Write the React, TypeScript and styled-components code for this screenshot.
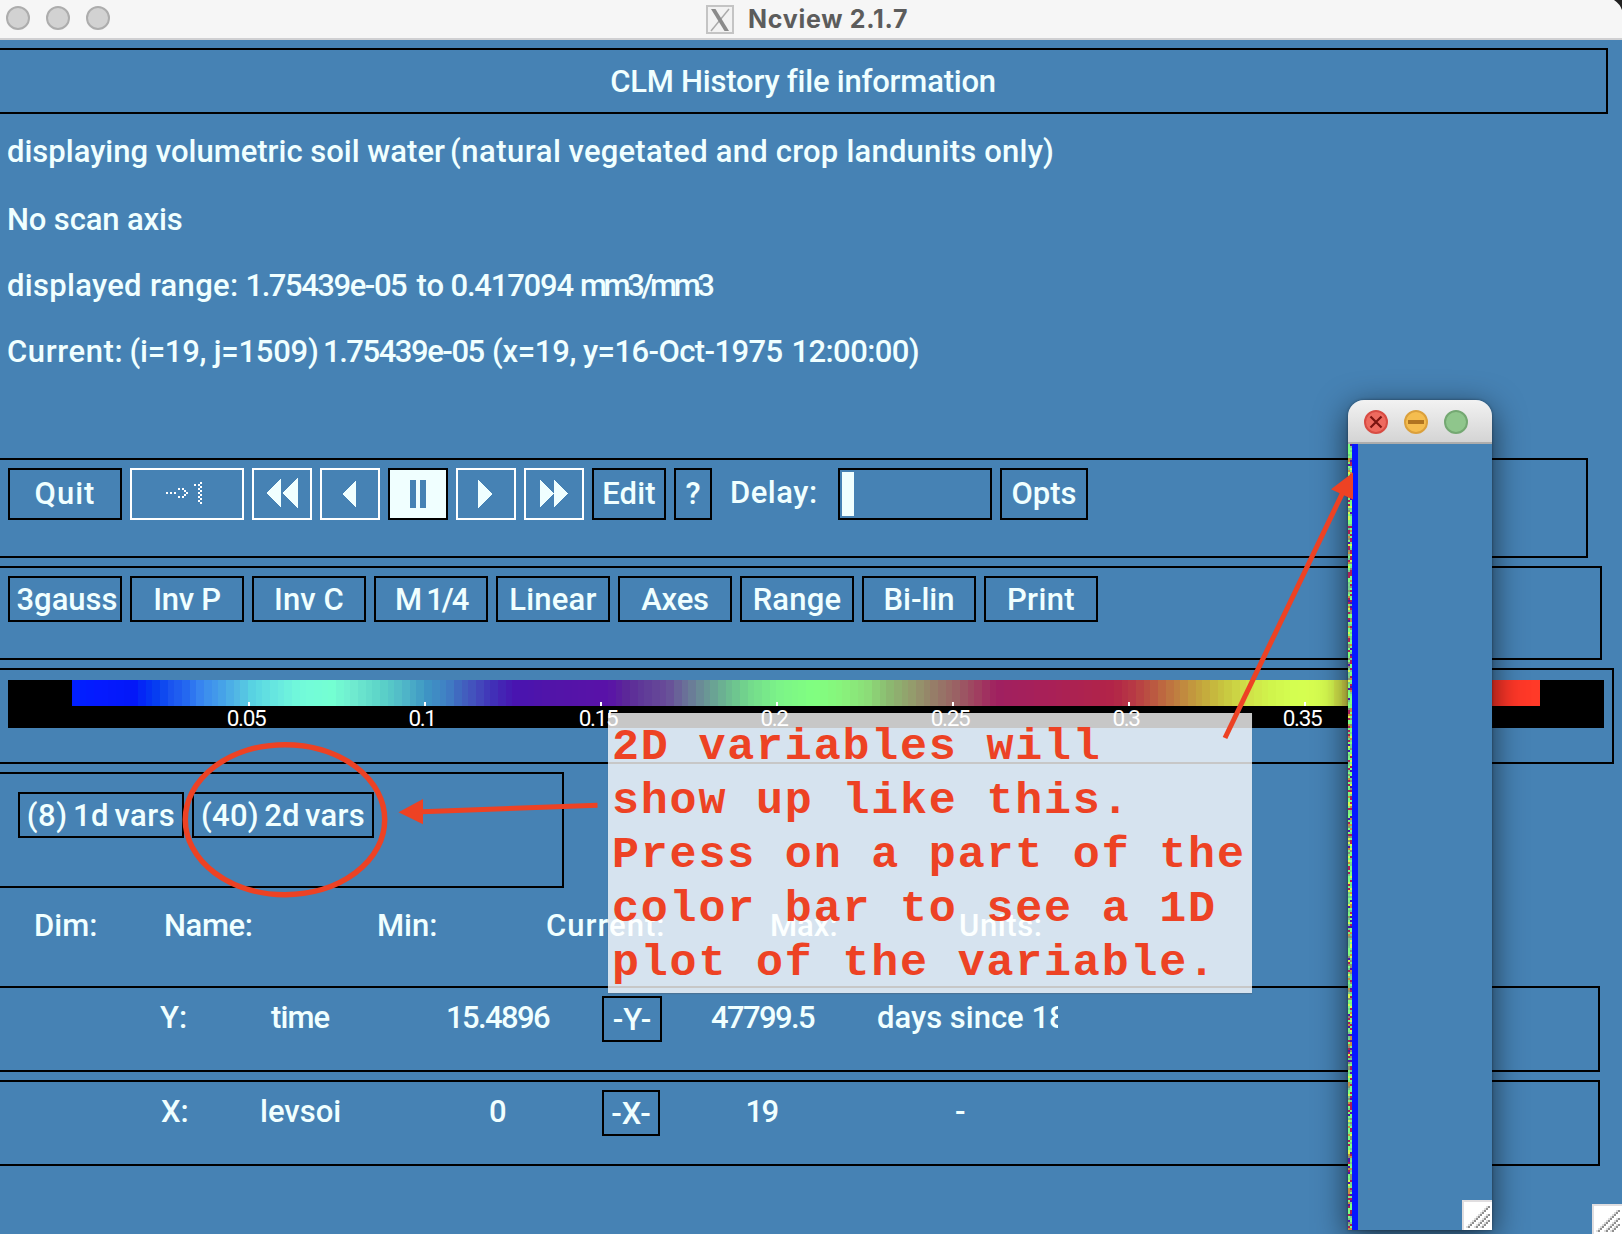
import React from "react";
import styled, { createGlobalStyle } from "styled-components";

const STEEL = "#4682b4";
const AZURE = "#f0ffff";
const MARKER = "#ed4224";

const GlobalStyle = createGlobalStyle`
  html, body { margin: 0; padding: 0; background: ${STEEL}; }
  * { box-sizing: border-box; }
`;

const Desktop = styled.div`
  position: relative;
  width: 1622px;
  height: 1234px;
  overflow: hidden;
  background: ${STEEL};
  color: ${AZURE};
  font-family: Roboto, "Liberation Sans", sans-serif;
  font-weight: 500;
  font-size: 31px;
  line-height: 32px;
  white-space: pre;
`;

const TitleBar = styled.header`
  display: flex;
  align-items: flex-start;
  height: 40px;
  padding: 6px 0 0 6px;
  background: #f6f6f6;
  border-bottom: 2px solid #d0d0d2;
`;

const Lights = styled.div`
  display: flex;
  gap: 16px;
`;

const Light = styled.span<{ $fill: string; $ring: string }>`
  display: grid;
  place-items: center;
  width: 24px;
  height: 24px;
  border-radius: 50%;
  background: ${(p) => p.$fill};
  border: 2px solid ${(p) => p.$ring};
`;

const TitleIcon = styled.svg`
  display: block;
  margin: -2px 13px 0 595px;
`;

const TitleText = styled.h1`
  margin: -3px 0 0;
  font-family: Inter, "Liberation Sans", sans-serif;
  font-size: 25px;
  font-weight: 700;
  line-height: 32px;
  letter-spacing: 0.72px;
  color: #5c5c5c;
`;

const Corner = styled.svg`
  position: absolute;
  top: 0;
  right: 0;
`;

const Panel = styled.section<{ $w: number; $h: number; $pad?: string }>`
  display: flex;
  align-items: flex-start;
  gap: 8px;
  width: ${(p) => p.$w + 2}px;
  height: ${(p) => p.$h}px;
  margin: 8px 0 0 -2px;
  padding: ${(p) => p.$pad ?? "8px"};
  border: 2px solid #000;
`;

const Heading = styled.h2`
  flex: 1;
  margin: 0;
  font: inherit;
  text-align: center;
  letter-spacing: -0.22px;
`;

const Info = styled.section`
  display: flex;
  flex-direction: column;
  gap: 34px;
  height: 344px;
  margin-bottom: -8px;
  padding: 22px 0 0 7px;
`;

const InfoLine = styled.p<{ $first?: boolean }>`
  display: flex;
  margin: 0 0 ${(p) => (p.$first ? 2 : 0)}px;
`;

const Segment = styled.span<{ $w?: number; $ls?: number }>`
  flex: none;
  width: ${(p) => (p.$w ? `${p.$w}px` : "auto")};
  letter-spacing: ${(p) => p.$ls ?? 0}px;
`;

const Button = styled.button<{ $w: number; $tall?: boolean; $off?: boolean; $on?: boolean; $ls?: number; $ws?: number; $shift?: number }>`
  display: flex;
  align-items: center;
  justify-content: center;
  flex: none;
  width: ${(p) => p.$w}px;
  height: ${(p) => (p.$tall ? 52 : 46)}px;
  padding: ${(p) => (p.$tall ? 0 : 2)}px 0 0 ${(p) => p.$shift ?? 0}px;
  border: 2px solid ${(p) => (p.$off ? "#fff" : "#000")};
  border-radius: 0;
  background: ${(p) => (p.$on ? AZURE : "transparent")};
  color: ${AZURE};
  font: inherit;
  letter-spacing: ${(p) => p.$ls ?? 0}px;
  word-spacing: ${(p) => p.$ws ?? 0}px;
`;

const GotoMark = styled.svg`
  margin: -2px 5px 0 0;
`;

const DelayLabel = styled.label`
  width: 110px;
  padding: 9px 0 0 10px;
  letter-spacing: 0.5px;
`;

const Slider = styled.div`
  width: 154px;
  height: 52px;
  padding: 2px;
  border: 2px solid #000;
`;

const Thumb = styled.div`
  width: 12px;
  height: 44px;
  background: ${AZURE};
`;

const ColorBar = styled.div`
  width: 1596px;
  height: 48px;
  background: #000;
`;

const Bands = styled.div`
  display: flex;
  width: 1468px;
  height: 26px;
  margin-left: 64px;
`;

const Band = styled.i`
  flex: none;
  height: 26px;
`;

const Scale = styled.div`
  display: flex;
  padding-left: 150px;
`;

const Tick = styled.span`
  position: relative;
  width: 176px;
  text-align: center;
  font-size: 22.5px;
  font-weight: 400;
  line-height: 24px;
  letter-spacing: -1.4px;
  color: #fff;
  &::before {
    content: "";
    position: absolute;
    left: 90px;
    top: -4px;
    width: 2px;
    height: 4px;
    background: #fff;
  }
`;

const DimHeader = styled.div`
  display: grid;
  grid-template-columns: 130px 213px 169px 224px 189px 200px;
  height: 98px;
  margin-bottom: -8px;
  padding: 22px 0 0 34px;
`;

const Values = styled(Panel)`
  gap: 0;
`;

const Cell = styled.span<{ $x: number; $w: number; $ls?: number; $clip?: boolean }>`
  flex: none;
  width: ${(p) => p.$w}px;
  padding: 6px 0 0 ${(p) => p.$x}px;
  overflow: ${(p) => (p.$clip ? "hidden" : "visible")};
  letter-spacing: ${(p) => p.$ls ?? 0}px;
`;

const Note = styled.aside`
  position: absolute;
  left: 608px;
  top: 713px;
  width: 644px;
  height: 280px;
  padding: 8px 0 0 4px;
  background: rgba(255, 255, 255, 0.78);
  box-shadow: 0 1px 1px rgba(80, 90, 100, 0.35);
  color: ${MARKER};
  font-family: "Liberation Mono", monospace;
  font-size: 45px;
  font-weight: 700;
  line-height: 54px;
  letter-spacing: 1.8px;
`;

const PlotWindow = styled.div`
  position: absolute;
  left: 1348px;
  top: 400px;
  width: 144px;
  height: 830px;
  border-radius: 16px 16px 0 0;
  background: ${STEEL};
  box-shadow: 0 8px 32px rgba(0, 0, 0, 0.62), 0 0 3px rgba(0, 0, 0, 0.4);
`;

const PlotTitle = styled.div`
  display: flex;
  gap: 16px;
  height: 44px;
  padding: 10px 0 0 16px;
  border-radius: 16px 16px 0 0;
  border-bottom: 2px solid #adadad;
  background: linear-gradient(#f2f2f2, #d4d4d4);
`;

const PlotBody = styled.div`
  display: flex;
  height: 786px;
`;

const BlueStripe = styled.div`
  width: 6px;
  background: #0418ff;
`;

const PlotGrip = styled.div`
  margin: auto 0 0 auto;
  height: 30px;
`;

const MainGrip = styled.div`
  position: absolute;
  right: 0;
  bottom: 0;
  height: 30px;
`;

const Markup = styled.svg`
  position: absolute;
  left: 0;
  top: 0;
  pointer-events: none;
`;

const STOPS: [number, string][] = [
  [72, "0020ff"], [99, "051aff"], [134, "0418f8"], [148, "0430f4"], [158, "0640f0"],
  [172, "1c55f0"], [186, "2468f0"], [202, "3a88f0"], [221, "45a0e8"], [237, "52b8e4"],
  [253, "58d4e2"], [277, "68e8e0"], [300, "72fada"], [332, "74ffd2"], [352, "70ecd0"],
  [380, "5cd4c8"], [403, "50b8c8"], [427, "3e94c4"], [447, "4080c4"], [459, "4068c0"],
  [474, "4450bc"], [490, "4034b8"], [514, "4814b0"], [554, "5214a8"], [609, "5a12a8"],
  [627, "5c2898"], [645, "603c98"], [667, "684c98"], [689, "6a7898"], [712, "6aa094"],
  [729, "6cbc90"], [752, "74dc8c"], [779, "7cf488"], [814, "80ff80"], [841, "88f47c"],
  [868, "8cdc78"], [890, "8cb870"], [912, "949c6c"], [935, "967c68"], [957, "9a6064"],
  [979, "a03c60"], [997, "a02060"], [1046, "a82058"], [1113, "b22448"], [1136, "b83c44"],
  [1158, "bc6040"], [1180, "c08440"], [1203, "c4a83c"], [1225, "c8c840"], [1247, "d0e048"],
  [1270, "d0f44c"], [1296, "d4ff50"], [1330, "d8fb50"], [1380, "e0a040"], [1440, "f04030"],
  [1492, "ff3428"], [1540, "ff3a28"],
];

const rgb = (hex: string) => [0, 2, 4].map((i) => parseInt(hex.slice(i, i + 2), 16));

function colorAt(x: number) {
  let i = 1;
  while (i < STOPS.length - 1 && STOPS[i][0] < x) i++;
  const [x0, a] = STOPS[i - 1];
  const [x1, b] = STOPS[i];
  const t = Math.min(1, Math.max(0, (x - x0) / (x1 - x0)));
  const ca = rgb(a);
  const cb = rgb(b);
  return `rgb(${ca.map((v, k) => Math.round(v + (cb[k] - v) * t)).join(",")})`;
}

const BANDS = Array.from({ length: 200 }, (_, i) => {
  const from = Math.round((i * 734) / 200) * 2;
  const to = Math.round(((i + 1) * 734) / 200) * 2;
  return { width: to - from, background: colorAt(72 + (from + to) / 2) };
});

const NOISE = ["#80ff80", "#80ff80", "#80f080", "#a82058", "#a82058", "#78c890", "#d8f850", "#5014a8", "#8c9470", "#c89040", "#78d888", "#80ff80"];

function NoiseStrip() {
  let seed = 7;
  const cells = Array.from({ length: 786 }, (_, i) => {
    seed = (seed * 16807) % 2147483647;
    return { x: (i % 2) * 2, y: (i >> 1) * 2, c: NOISE[seed % NOISE.length] };
  });
  return (
    <svg width="4" height="786" shapeRendering="crispEdges">
      {cells.map((p, i) => (
        <rect key={i} x={p.x} y={p.y} width="2" height="2" fill={p.c} />
      ))}
    </svg>
  );
}

function Grip() {
  const dots: [number, number][] = [];
  [11, 7, 4].forEach((n) => {
    for (let k = 0; k < n; k++) dots.push([26 - k * 2, 26 - (n - 1) * 2 + k * 2]);
  });
  return (
    <svg width="30" height="30" shapeRendering="crispEdges" display="block">
      <rect width="30" height="30" fill="#e0dee0" />
      <rect x="2" y="2" width="28" height="28" fill="#fff" />
      {dots.map(([x, y], i) => (
        <rect key={i} x={x - 2} y={y} width="4" height="2" fill="#dcdcdc" />
      ))}
      {dots.map(([x, y], i) => (
        <rect key={i} x={x} y={y} width="2" height="2" fill="#8f8f8f" />
      ))}
    </svg>
  );
}

const DOTS = [
  [0, 10], [4, 10], [8, 10], [12, 6], [16, 6], [18, 8], [20, 10], [18, 12], [16, 14], [12, 14],
  [28, 2], [32, 2], [34, 0], [34, 4], [32, 6], [34, 8], [32, 10], [34, 12], [32, 14], [34, 16], [32, 18], [34, 20],
];

function Glyph({ d }: { d: string }) {
  return (
    <svg width="56" height="48" shapeRendering="crispEdges" fill={AZURE}>
      <path d={d} />
    </svg>
  );
}

type Option = { label: string; ls: number; ws?: number; shift?: number };

const OPTIONS: Option[] = [
  { label: "3gauss", ls: 0, shift: 4 },
  { label: "Inv P", ls: -0.3 },
  { label: "Inv C", ls: 0.1 },
  { label: "M 1/4", ls: -2.2, ws: 1 },
  { label: "Linear", ls: 0.2 },
  { label: "Axes", ls: -0.2 },
  { label: "Range", ls: 0.2 },
  { label: "Bi-lin", ls: 0 },
  { label: "Print", ls: 0.4 },
];

export default function App() {
  return (
    <Desktop>
      <GlobalStyle />
      <TitleBar>
        <Lights>
          {[0, 1, 2].map((i) => (
            <Light key={i} $fill="#d2d2d2" $ring="#adadad" />
          ))}
        </Lights>
        <TitleIcon width="30" height="30">
          <rect x="2" y="2" width="26" height="27" fill="#f2f2f2" stroke="#c4c4c4" strokeWidth="2" />
          <path d="M24 5 6 27" stroke="#aaa" strokeWidth="1.5" />
          <path d="M6 5h4.5L24 27h-4.5z" fill="#8a8a8a" />
        </TitleIcon>
        <TitleText>Ncview 2.1.7</TitleText>
        <Corner width="9" height="12">
          <path d="M1 0h8v10Q7 4 1 0z" fill="#222" />
        </Corner>
      </TitleBar>

      <Panel $w={1608} $h={66} $pad="16px 0 0">
        <Heading>CLM History file information</Heading>
      </Panel>

      <Info>
        <InfoLine $first>
          <Segment $w={443} $ls={0}>displaying volumetric soil water </Segment>
          <Segment $w={118.5} $ls={0.5}>(natural </Segment>
          <Segment $ls={0.22}>vegetated and crop landunits only)</Segment>
        </InfoLine>
        <InfoLine>
          <Segment $ls={-0.15}>No scan axis</Segment>
        </InfoLine>
        <InfoLine>
          <Segment $w={238.5} $ls={0.3}>displayed range: </Segment>
          <Segment $w={171} $ls={-1.45}>1.75439e-05 </Segment>
          <Segment $w={34}>to </Segment>
          <Segment $w={129.5} $ls={-1.2}>0.417094 </Segment>
          <Segment $ls={-3.4}>mm3/mm3</Segment>
        </InfoLine>
        <InfoLine>
          <Segment $w={122.5} $ls={0.6}>Current: </Segment>
          <Segment $w={193.5} $ls={-0.25}>(i=19, j=1509) </Segment>
          <Segment $w={169} $ls={-1.45}>1.75439e-05 </Segment>
          <Segment $w={91} $ls={-0.3}>(x=19, </Segment>
          <Segment $w={208.5} $ls={-0.6}>y=16-Oct-1975 </Segment>
          <Segment $ls={-0.6}>12:00:00)</Segment>
        </InfoLine>
      </Info>

      <Panel $w={1588} $h={100}>
        <Button $w={114} $tall $ls={1}>Quit</Button>
        <Button $w={114} $tall $off>
          <GotoMark width="38" height="22" shapeRendering="crispEdges" fill="#fff">
            {DOTS.map(([x, y], i) => (
              <rect key={i} x={x} y={y} width="2" height="2" />
            ))}
          </GotoMark>
        </Button>
        <Button $w={60} $tall $off><Glyph d="M12 23 27 8v30zM28 23 44 8v30z" /></Button>
        <Button $w={60} $tall $off><Glyph d="M20 24 34 10v28z" /></Button>
        <Button $w={60} $tall $on>
          <svg width="56" height="48" fill={STEEL}>
            <path d="M20 10h6v28h-6zM30 10h6v28h-6z" />
          </svg>
        </Button>
        <Button $w={60} $tall $off><Glyph d="M20 10 34 24 20 38z" /></Button>
        <Button $w={60} $tall $off><Glyph d="M14 10 28 23 14 37zM28 10 42 23 28 37z" /></Button>
        <Button $w={74} $tall $ls={0.2}>Edit</Button>
        <Button $w={38} $tall>?</Button>
        <DelayLabel>Delay:</DelayLabel>
        <Slider><Thumb /></Slider>
        <Button $w={88} $tall>Opts</Button>
      </Panel>

      <Panel $w={1602} $h={94}>
        {OPTIONS.map((o) => (
          <Button key={o.label} $w={114} $ls={o.ls} $ws={o.ws} $shift={o.shift}>{o.label}</Button>
        ))}
      </Panel>

      <Panel $w={1614} $h={96} $pad="10px 8px">
        <ColorBar>
          <Bands>
            {BANDS.map((b, i) => (
              <Band key={i} style={b} />
            ))}
          </Bands>
          <Scale>
            {["0.05", "0.1", "0.15", "0.2", "0.25", "0.3", "0.35"].map((t) => (
              <Tick key={t}>{t}</Tick>
            ))}
          </Scale>
        </ColorBar>
      </Panel>

      <Panel $w={564} $h={116} $pad="18px">
        <Button $w={166} $ls={0.5} $ws={-2.8}>(8) 1d vars</Button>
        <Button $w={182} $ls={0.3} $ws={-2.8}>(40) 2d vars</Button>
      </Panel>

      <DimHeader>
        <Segment>Dim:</Segment>
        <Segment $ls={-0.4}>Name:</Segment>
        <Segment>Min:</Segment>
        <Segment $ls={1}>Current:</Segment>
        <Segment>Max:</Segment>
        <Segment $ls={0.6}>Units:</Segment>
      </DimHeader>

      <Values $w={1600} $h={86}>
        <Cell $x={152} $w={263}>Y:</Cell>
        <Cell $x={0} $w={171} $ls={-0.9}>time</Cell>
        <Cell $x={4} $w={160} $ls={-1.6}>15.4896</Cell>
        <Button $w={60}>-Y-</Button>
        <Cell $x={49} $w={215} $ls={-1.6}>47799.5</Cell>
        <Cell $x={0} $w={181} $clip>days since 18</Cell>
      </Values>

      <Values $w={1600} $h={86}>
        <Cell $x={153} $w={252}>X:</Cell>
        <Cell $x={0} $w={229}>levsoi</Cell>
        <Cell $x={0} $w={113}>0</Cell>
        <Button $w={58}>-X-</Button>
        <Cell $x={85.5} $w={295} $ls={-1.6}>19</Cell>
        <Cell $x={0} $w={60}>-</Cell>
      </Values>

      <MainGrip><Grip /></MainGrip>

      <Note>{"2D variables will\nshow up like this.\nPress on a part of the\ncolor bar to see a 1D\nplot of the variable."}</Note>

      <PlotWindow>
        <PlotTitle>
          <Light $fill="#ee6a5f" $ring="#d84c43">
            <svg width="14" height="14" stroke="#7a1410" strokeWidth="2.2"><path d="M1.500 1.500 12.500 12.500M12.500 1.500 1.500 12.500" /></svg>
          </Light>
          <Light $fill="#f5bd4f" $ring="#dba03c">
            <svg width="16" height="4" fill="#b07420"><rect width="16" height="4" /></svg>
          </Light>
          <Light $fill="#8fc68c" $ring="#74a872" />
        </PlotTitle>
        <PlotBody>
          <NoiseStrip />
          <BlueStripe />
          <PlotGrip><Grip /></PlotGrip>
        </PlotBody>
      </PlotWindow>

      <Markup width="1622" height="1234" fill={MARKER} stroke="none">
        <ellipse cx="285" cy="819.700" rx="99.700" ry="75" fill="none" stroke={MARKER} strokeWidth="5.500" />
        <path d="M398.500 812.300 423 799v25.300z" />
        <path d="M422 811.700 597.500 805.300" stroke={MARKER} strokeWidth="5" />
        <path d="M1353 472.500 1331 489.300 1353 499.500z" />
        <path d="M1342.500 493 1225 738" stroke={MARKER} strokeWidth="5" />
      </Markup>
    </Desktop>
  );
}
